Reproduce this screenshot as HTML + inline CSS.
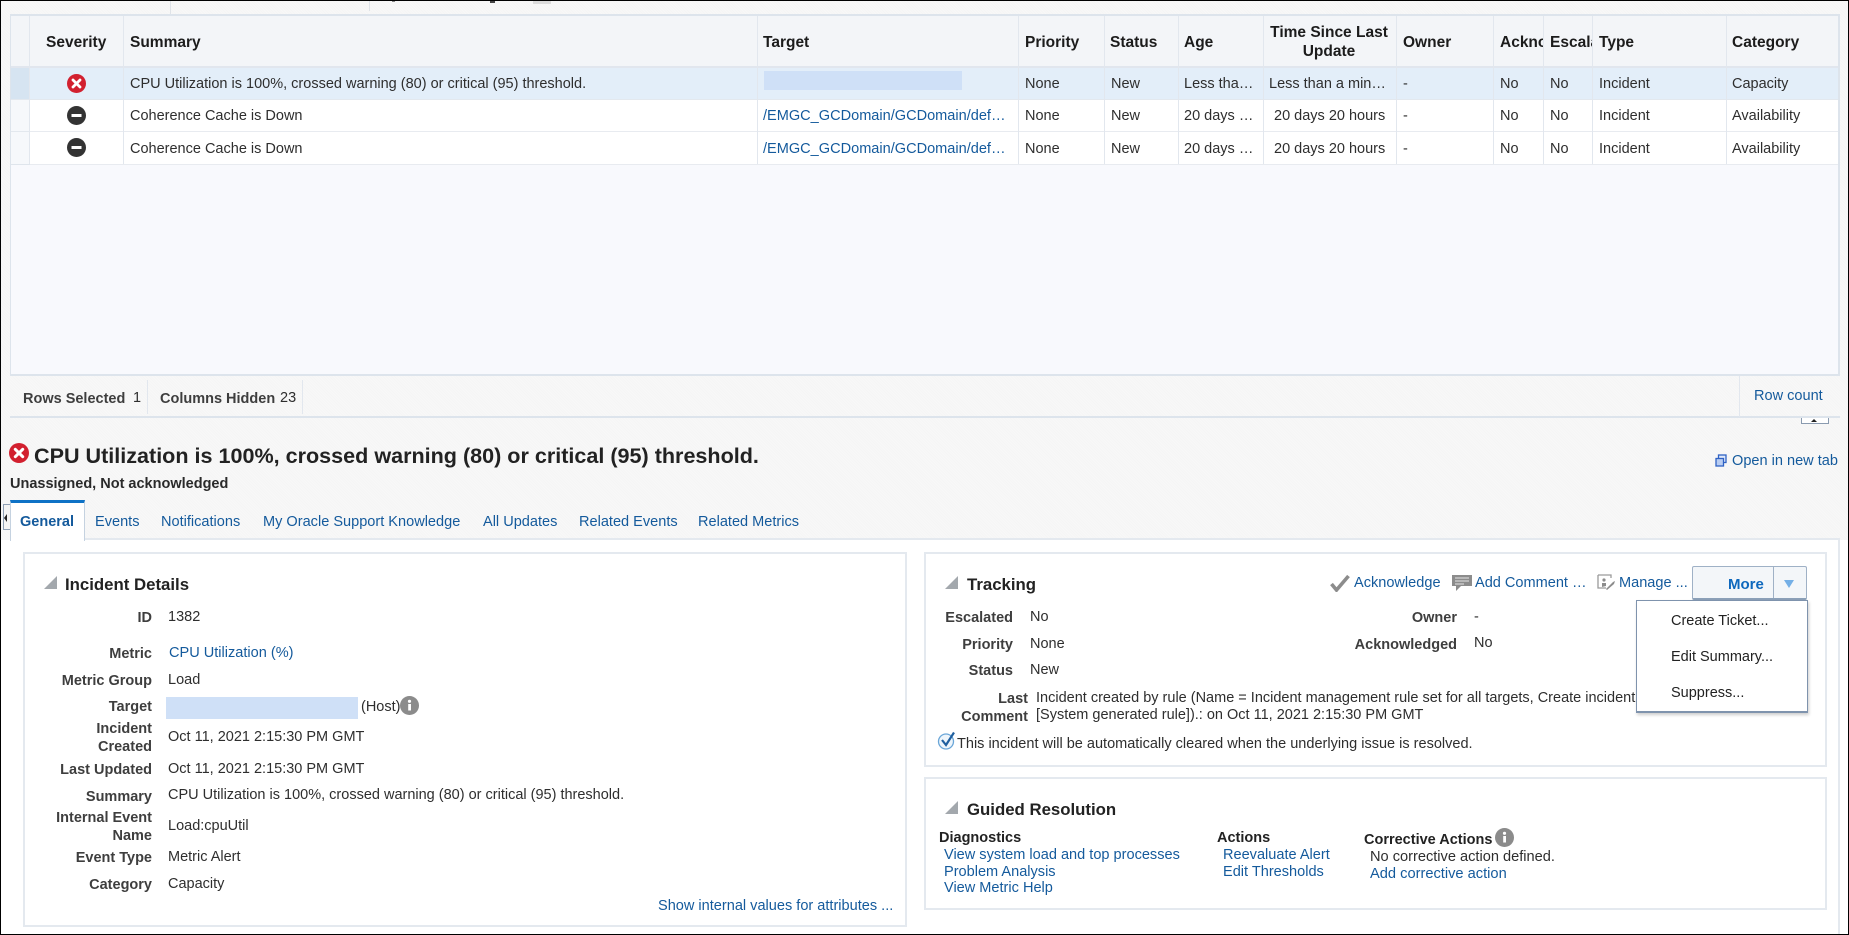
<!DOCTYPE html>
<html><head><meta charset="utf-8"><style>
html,body{margin:0;padding:0;background:#fff}
body{position:relative;width:1849px;height:935px;overflow:hidden;font-family:"Liberation Sans",sans-serif;font-size:14.5px;color:#2e2e2e}
.a{position:absolute}
.t{position:absolute;white-space:nowrap;line-height:18px;margin-top:-8px}
.h{font-weight:bold;color:#1c1c1c;font-size:15.5px}
.b{font-weight:bold;color:#3e3e3e}
.l{color:#145a9c;font-size:14.55px}
.r{text-align:right}
.c{position:absolute;overflow:hidden;white-space:nowrap;line-height:18px;margin-top:-8px}
.hat{background:repeating-linear-gradient(45deg,#f5f5f5 0,#f5f5f5 1px,#f8f8f8 1px,#f8f8f8 2px)}
.v{position:absolute;width:1px;background:#e2e7ee}
.p{position:absolute;background:#fff;border:2px solid #e4e9ef;box-sizing:border-box}
.sec{font-size:16.8px;font-weight:bold;color:#222}
</style></head><body>

<div class="a hat" style="left:0;top:0;width:1849px;height:540px"></div>

<!-- top residual -->
<div class="a" style="left:170px;top:1px;width:1px;height:13px;background:#dfe3e8"></div>
<div class="a" style="left:369px;top:1px;width:1px;height:10px;background:#dfe3e8"></div>
<div class="a" style="left:392px;top:1px;width:3px;height:1px;background:#888"></div>
<div class="a" style="left:490px;top:1px;width:5px;height:2px;background:#444"></div>
<div class="a" style="left:533px;top:1px;width:18px;height:3px;background:#dcdcdc"></div>

<!-- table -->
<div class="a" style="left:10px;top:14px;width:1830px;height:362px;background:#f8f9fd;border:1px solid #dde4ec;border-width:2px 2px 2px 1px;box-sizing:border-box"></div>
<div class="a" style="left:11px;top:16px;width:1827px;height:50px;background:#f3f5f8;border-bottom:2px solid #e1e6ee;box-sizing:content-box"></div>
<div class="a" style="left:11px;top:68px;width:1827px;height:31px;background:#e3eef9;border-bottom:1px solid #e3e8ee"></div>
<div class="a" style="left:30px;top:100px;width:1808px;height:31px;background:#fff;border-bottom:1px solid #e8ebf0"></div>
<div class="a" style="left:30px;top:132px;width:1808px;height:32px;background:#fff;border-bottom:1px solid #e8ebf0"></div>
<div class="a" style="left:11px;top:100px;width:19px;height:64px;background:#f6f8fb;border-bottom:1px solid #dfe5ec"></div>
<div class="a" style="left:11px;top:131px;width:19px;height:1px;background:#e3e8ee"></div>
<div class="a" style="left:11px;top:68px;width:19px;height:31px;background:#d6e4f1"></div>

<div class="v" style="left:29px;top:16px;height:148px"></div>
<div class="v" style="left:123px;top:16px;height:148px"></div>
<div class="v" style="left:757px;top:16px;height:148px"></div>
<div class="v" style="left:1018px;top:16px;height:148px"></div>
<div class="v" style="left:1104px;top:16px;height:148px"></div>
<div class="v" style="left:1178px;top:16px;height:148px"></div>
<div class="v" style="left:1263px;top:16px;height:148px"></div>
<div class="v" style="left:1396px;top:16px;height:148px"></div>
<div class="v" style="left:1493px;top:16px;height:148px"></div>
<div class="v" style="left:1543px;top:16px;height:148px"></div>
<div class="v" style="left:1592px;top:16px;height:148px"></div>
<div class="v" style="left:1726px;top:16px;height:148px"></div>

<!-- header -->
<span class="t h" style="left:46px;top:42px">Severity</span>
<span class="t h" style="left:130px;top:42px">Summary</span>
<span class="t h" style="left:763px;top:42px">Target</span>
<span class="t h" style="left:1025px;top:42px">Priority</span>
<span class="t h" style="left:1110px;top:42px">Status</span>
<span class="t h" style="left:1184px;top:42px">Age</span>
<span class="t h" style="left:1263px;width:132px;top:32px;text-align:center">Time Since Last</span>
<span class="t h" style="left:1263px;width:132px;top:51px;text-align:center">Update</span>
<span class="t h" style="left:1403px;top:42px">Owner</span>
<span class="c h" style="left:1500px;width:43px;top:42px">Acknowledged</span>
<span class="c h" style="left:1550px;width:42px;top:42px">Escalated</span>
<span class="t h" style="left:1599px;top:42px">Type</span>
<span class="t h" style="left:1732px;top:42px">Category</span>

<!-- sev icons -->
<svg class="a" style="left:67px;top:74px" width="19" height="19" viewBox="0 0 19 19"><circle cx="9.5" cy="9.5" r="9.5" fill="#d2202f"/><path d="M6 6l7 7M13 6l-7 7" stroke="#fff" stroke-width="2.8" stroke-linecap="round"/></svg>
<svg class="a" style="left:67px;top:106px" width="19" height="19" viewBox="0 0 19 19"><circle cx="9.5" cy="9.5" r="9.5" fill="#333"/><rect x="4.5" y="8" width="10" height="3" fill="#fff"/></svg>
<svg class="a" style="left:67px;top:138px" width="19" height="19" viewBox="0 0 19 19"><circle cx="9.5" cy="9.5" r="9.5" fill="#333"/><rect x="4.5" y="8" width="10" height="3" fill="#fff"/></svg>

<!-- row 1 -->
<span class="t" style="left:130px;top:83px">CPU Utilization is 100%, crossed warning (80) or critical (95) threshold.</span>
<div class="a" style="left:764px;top:71px;width:198px;height:19px;background:#cfe0f7"></div>
<span class="t" style="left:1025px;top:83px">None</span><span class="t" style="left:1111px;top:83px">New</span><span class="t" style="left:1184px;top:83px">Less tha…</span><span class="t" style="left:1269px;top:83px">Less than a min…</span><span class="t" style="left:1403px;top:83px">-</span><span class="t" style="left:1500px;top:83px">No</span><span class="t" style="left:1550px;top:83px">No</span><span class="t" style="left:1599px;top:83px">Incident</span><span class="t" style="left:1732px;top:83px">Capacity</span>
<!-- row 2 -->
<span class="t" style="left:130px;top:115px">Coherence Cache is Down</span>
<span class="t l" style="left:763px;top:115px">/EMGC_GCDomain/GCDomain/def…</span>
<span class="t" style="left:1025px;top:115px">None</span><span class="t" style="left:1111px;top:115px">New</span><span class="t" style="left:1184px;top:115px">20 days …</span><span class="t" style="left:1274px;top:115px">20 days 20 hours</span><span class="t" style="left:1403px;top:115px">-</span><span class="t" style="left:1500px;top:115px">No</span><span class="t" style="left:1550px;top:115px">No</span><span class="t" style="left:1599px;top:115px">Incident</span><span class="t" style="left:1732px;top:115px">Availability</span>
<!-- row 3 -->
<span class="t" style="left:130px;top:148px">Coherence Cache is Down</span>
<span class="t l" style="left:763px;top:148px">/EMGC_GCDomain/GCDomain/def…</span>
<span class="t" style="left:1025px;top:148px">None</span><span class="t" style="left:1111px;top:148px">New</span><span class="t" style="left:1184px;top:148px">20 days …</span><span class="t" style="left:1274px;top:148px">20 days 20 hours</span><span class="t" style="left:1403px;top:148px">-</span><span class="t" style="left:1500px;top:148px">No</span><span class="t" style="left:1550px;top:148px">No</span><span class="t" style="left:1599px;top:148px">Incident</span><span class="t" style="left:1732px;top:148px">Availability</span>

<!-- footer -->
<div class="a" style="left:10px;top:416px;width:1830px;height:2px;background:#dde4ec"></div>
<div class="v" style="left:147px;top:380px;height:34px"></div>
<div class="v" style="left:302px;top:380px;height:34px"></div>
<div class="v" style="left:1739px;top:376px;height:41px"></div>
<span class="t b" style="left:23px;top:398px">Rows Selected</span><span class="t" style="left:133px;top:397px">1</span>
<span class="t b" style="left:160px;top:398px">Columns Hidden</span><span class="t" style="left:280px;top:397px">23</span>
<span class="t l" style="left:1754px;top:395px">Row count</span>
<div class="a" style="left:1801px;top:418px;width:26px;height:5px;border:1px solid #8a9bb0;border-top:0;background:#fff"></div>
<div class="a" style="left:1811px;top:419px;width:0;height:0;border:3px solid transparent;border-bottom:3px solid #222;border-top:0"></div>

<!-- title -->
<svg class="a" style="left:9px;top:443px" width="20" height="20" viewBox="0 0 20 20"><circle cx="10" cy="10" r="10" fill="#d2202f"/><path d="M6.3 6.3l7.4 7.4M13.7 6.3l-7.4 7.4" stroke="#fff" stroke-width="3" stroke-linecap="round"/></svg>
<span class="t" style="left:34px;top:456px;font-size:21.57px;font-weight:bold;color:#222;line-height:26px;margin-top:-13px">CPU Utilization is 100%, crossed warning (80) or critical (95) threshold.</span>
<span class="t" style="left:10px;top:483px;font-weight:bold;font-size:14.5px;color:#2a2a2a">Unassigned, Not acknowledged</span>
<svg class="a" style="left:1715px;top:454px" width="12" height="13" viewBox="0 0 12 13"><rect x="3.5" y="1" width="7.5" height="7.5" fill="#dfe8fa" stroke="#2f62c4" stroke-width="1.3"/><rect x="1" y="4.5" width="7.5" height="7.5" fill="#b9cdf2" stroke="#2f62c4" stroke-width="1.3"/></svg>
<span class="t l" style="left:1732px;top:460px">Open in new tab</span>

<!-- main white -->
<div class="a" style="left:10px;top:538px;width:1830px;height:396px;background:#fff;border-top:2px solid #e4e9ef;border-right:2px solid #e4e9ef;box-sizing:border-box"></div>

<!-- left splitter -->
<div class="a" style="left:3px;top:504px;width:7px;height:26px;border:1px solid #8fa0b5;border-right:0;box-sizing:border-box;background:#f4f4f4"></div>
<div class="a" style="left:4px;top:514px;width:0;height:0;border:4px solid transparent;border-right:3px solid #222;border-left:0"></div>

<!-- tabs -->
<div class="a" style="left:10px;top:500px;width:75px;height:41px;background:#fff;border:1px solid #c5d2e0;border-bottom:0;border-top:3px solid #0e72c6;box-sizing:border-box"></div>
<span class="t" style="left:20px;top:521px;color:#145a9c;font-weight:bold;font-size:14.5px">General</span>
<span class="t l" style="left:95px;top:521px">Events</span>
<span class="t l" style="left:161px;top:521px">Notifications</span>
<span class="t l" style="left:263px;top:521px">My Oracle Support Knowledge</span>
<span class="t l" style="left:483px;top:521px">All Updates</span>
<span class="t l" style="left:579px;top:521px">Related Events</span>
<span class="t l" style="left:698px;top:521px">Related Metrics</span>

<!-- panels -->
<div class="p" style="left:23px;top:552px;width:884px;height:375px"></div>
<div class="p" style="left:924px;top:552px;width:903px;height:215px"></div>
<div class="p" style="left:924px;top:777px;width:903px;height:133px"></div>

<!-- incident details -->
<svg class="a" style="left:44px;top:576px" width="13" height="13"><path d="M13 0V13H0Z" fill="#a3a8ad"/></svg>
<span class="t sec" style="left:65px;top:584px">Incident Details</span>

<span class="t r b" style="left:0;width:152px;top:617px">ID</span><span class="t" style="left:168px;top:616px">1382</span>
<span class="t r b" style="left:0;width:152px;top:653px">Metric</span><span class="t l" style="left:169px;top:652px">CPU Utilization (%)</span>
<span class="t r b" style="left:0;width:152px;top:680px">Metric Group</span><span class="t" style="left:168px;top:679px">Load</span>
<span class="t r b" style="left:0;width:152px;top:706px">Target</span>
<div class="a" style="left:166px;top:697px;width:192px;height:22px;background:#cfe0f7"></div>
<span class="t" style="left:361px;top:706px">(Host)</span>
<svg class="a" style="left:400px;top:696px" width="19" height="19" viewBox="0 0 19 19"><circle cx="9.5" cy="9.5" r="9.5" fill="#8b8b8b"/><rect x="8.2" y="8" width="2.8" height="6.5" fill="#fff"/><circle cx="9.5" cy="5.3" r="1.6" fill="#fff"/></svg>
<span class="t r b" style="left:0;width:152px;top:728px">Incident</span><span class="t r b" style="left:0;width:152px;top:746px">Created</span><span class="t" style="left:168px;top:736px">Oct 11, 2021 2:15:30 PM GMT</span>
<span class="t r b" style="left:0;width:152px;top:769px">Last Updated</span><span class="t" style="left:168px;top:768px">Oct 11, 2021 2:15:30 PM GMT</span>
<span class="t r b" style="left:0;width:152px;top:796px">Summary</span><span class="t" style="left:168px;top:794px">CPU Utilization is 100%, crossed warning (80) or critical (95) threshold.</span>
<span class="t r b" style="left:0;width:152px;top:817px">Internal Event</span><span class="t r b" style="left:0;width:152px;top:835px">Name</span><span class="t" style="left:168px;top:825px">Load:cpuUtil</span>
<span class="t r b" style="left:0;width:152px;top:857px">Event Type</span><span class="t" style="left:168px;top:856px">Metric Alert</span>
<span class="t r b" style="left:0;width:152px;top:884px">Category</span><span class="t" style="left:168px;top:883px">Capacity</span>
<span class="t l" style="left:658px;top:905px">Show internal values for attributes ...</span>

<!-- tracking -->
<svg class="a" style="left:945px;top:576px" width="13" height="13"><path d="M13 0V13H0Z" fill="#a3a8ad"/></svg>
<span class="t sec" style="left:967px;top:584px">Tracking</span>

<svg class="a" style="left:1330px;top:574px" width="20" height="18" viewBox="0 0 20 18"><path d="M1.5 10l5 6L18.5 2" fill="none" stroke="#8c8c8c" stroke-width="3.6"/></svg>
<span class="t l" style="left:1354px;top:582px">Acknowledge</span>
<svg class="a" style="left:1452px;top:574px" width="20" height="18" viewBox="0 0 20 18"><path d="M0 1h20v11H9l-5 5v-5H0z" fill="#8c8c8c"/><path d="M3 4h14M3 7h14M3 10h9" stroke="#e6e6e6" stroke-width="1"/></svg>
<span class="t l" style="left:1475px;top:582px">Add Comment …</span>
<svg class="a" style="left:1597px;top:574px" width="19" height="18" viewBox="0 0 19 18"><path d="M1 1h13v3M1 1v13h8" fill="none" stroke="#9a9a9a" stroke-width="1.3"/><circle cx="7" cy="6" r="1.6" fill="#8c8c8c"/><path d="M5 13V9h4v3" fill="#8c8c8c"/><path d="M9 15l7-7 2-1-1 3-7 6z" fill="#8c8c8c"/></svg>
<span class="t l" style="left:1619px;top:582px">Manage ...</span>
<div class="a" style="left:1692px;top:566px;width:115px;height:34px;background:#f3f6f9;border:1px solid #9fb1c6;border-bottom:2px solid #8ba0b8;border-radius:2px;box-sizing:border-box"></div>
<div class="a" style="left:1773px;top:567px;width:1px;height:31px;background:#9fb1c6"></div>
<span class="t" style="left:1728px;top:584px;font-weight:bold;font-size:15px;color:#0e68bd">More</span>
<div class="a" style="left:1784px;top:580px;width:0;height:0;border:5px solid transparent;border-top:8px solid #74afe6;border-bottom:0"></div>

<span class="t r b" style="left:0;width:1013px;top:617px">Escalated</span><span class="t" style="left:1030px;top:616px">No</span>
<span class="t r b" style="left:0;width:1013px;top:644px">Priority</span><span class="t" style="left:1030px;top:643px">None</span>
<span class="t r b" style="left:0;width:1013px;top:670px">Status</span><span class="t" style="left:1030px;top:669px">New</span>
<span class="t r b" style="left:0;width:1457px;top:617px">Owner</span><span class="t" style="left:1474px;top:616px">-</span>
<span class="t r b" style="left:0;width:1457px;top:644px">Acknowledged</span><span class="t" style="left:1474px;top:642px">No</span>
<span class="t r b" style="left:0;width:1028px;top:698px">Last</span><span class="t r b" style="left:0;width:1028px;top:716px">Comment</span>
<span class="t" style="left:1036px;top:697px">Incident created by rule (Name = Incident management rule set for all targets, Create incident</span>
<span class="t" style="left:1036px;top:714px">[System generated rule]).: on Oct 11, 2021 2:15:30 PM GMT</span>
<svg class="a" style="left:937px;top:731px" width="20" height="19" viewBox="0 0 20 19"><circle cx="9" cy="10.5" r="7.5" fill="#eef5fb" stroke="#6aa6d8" stroke-width="1.3"/><path d="M5 9l4 5L17 1.5" fill="none" stroke="#1f5f9f" stroke-width="2.2"/></svg>
<span class="t" style="left:957px;top:743px;font-size:14.53px">This incident will be automatically cleared when the underlying issue is resolved.</span>

<!-- dropdown -->
<div class="a" style="left:1636px;top:600px;width:172px;height:113px;background:#fff;border:1px solid #7f93ad;border-bottom:2px solid #7f93ad;box-sizing:border-box;box-shadow:1px 2px 3px rgba(0,0,0,.2)"></div>
<span class="t" style="left:1671px;top:620px;color:#222">Create Ticket...</span>
<span class="t" style="left:1671px;top:656px;color:#222">Edit Summary...</span>
<span class="t" style="left:1671px;top:692px;color:#222">Suppress...</span>

<!-- guided -->
<svg class="a" style="left:945px;top:801px" width="13" height="13"><path d="M13 0V13H0Z" fill="#a3a8ad"/></svg>
<span class="t sec" style="left:967px;top:809px">Guided Resolution</span>
<span class="t" style="left:939px;top:837px;font-weight:bold;color:#222">Diagnostics</span>
<span class="t l" style="left:944px;top:854px">View system load and top processes</span>
<span class="t l" style="left:944px;top:871px">Problem Analysis</span>
<span class="t l" style="left:944px;top:887px">View Metric Help</span>
<span class="t" style="left:1217px;top:837px;font-weight:bold;color:#222">Actions</span>
<span class="t l" style="left:1223px;top:854px">Reevaluate Alert</span>
<span class="t l" style="left:1223px;top:871px">Edit Thresholds</span>
<span class="t" style="left:1364px;top:839px;font-weight:bold;color:#222">Corrective Actions</span>
<svg class="a" style="left:1495px;top:828px" width="19" height="19" viewBox="0 0 19 19"><circle cx="9.5" cy="9.5" r="9.5" fill="#8b8b8b"/><rect x="8.2" y="8" width="2.8" height="6.5" fill="#fff"/><circle cx="9.5" cy="5.3" r="1.6" fill="#fff"/></svg>
<span class="t" style="left:1370px;top:856px;font-size:14.6px">No corrective action defined.</span>
<span class="t l" style="left:1370px;top:873px;font-size:14.65px">Add corrective action</span>

<!-- frame -->
<div class="a" style="left:0;top:0;width:1849px;height:1px;background:#000"></div>
<div class="a" style="left:0;top:0;width:1px;height:935px;background:#000"></div>
<div class="a" style="left:1848px;top:0;width:1px;height:935px;background:#000"></div>
<div class="a" style="left:0;top:934px;width:1849px;height:1px;background:#000"></div>
</body></html>
